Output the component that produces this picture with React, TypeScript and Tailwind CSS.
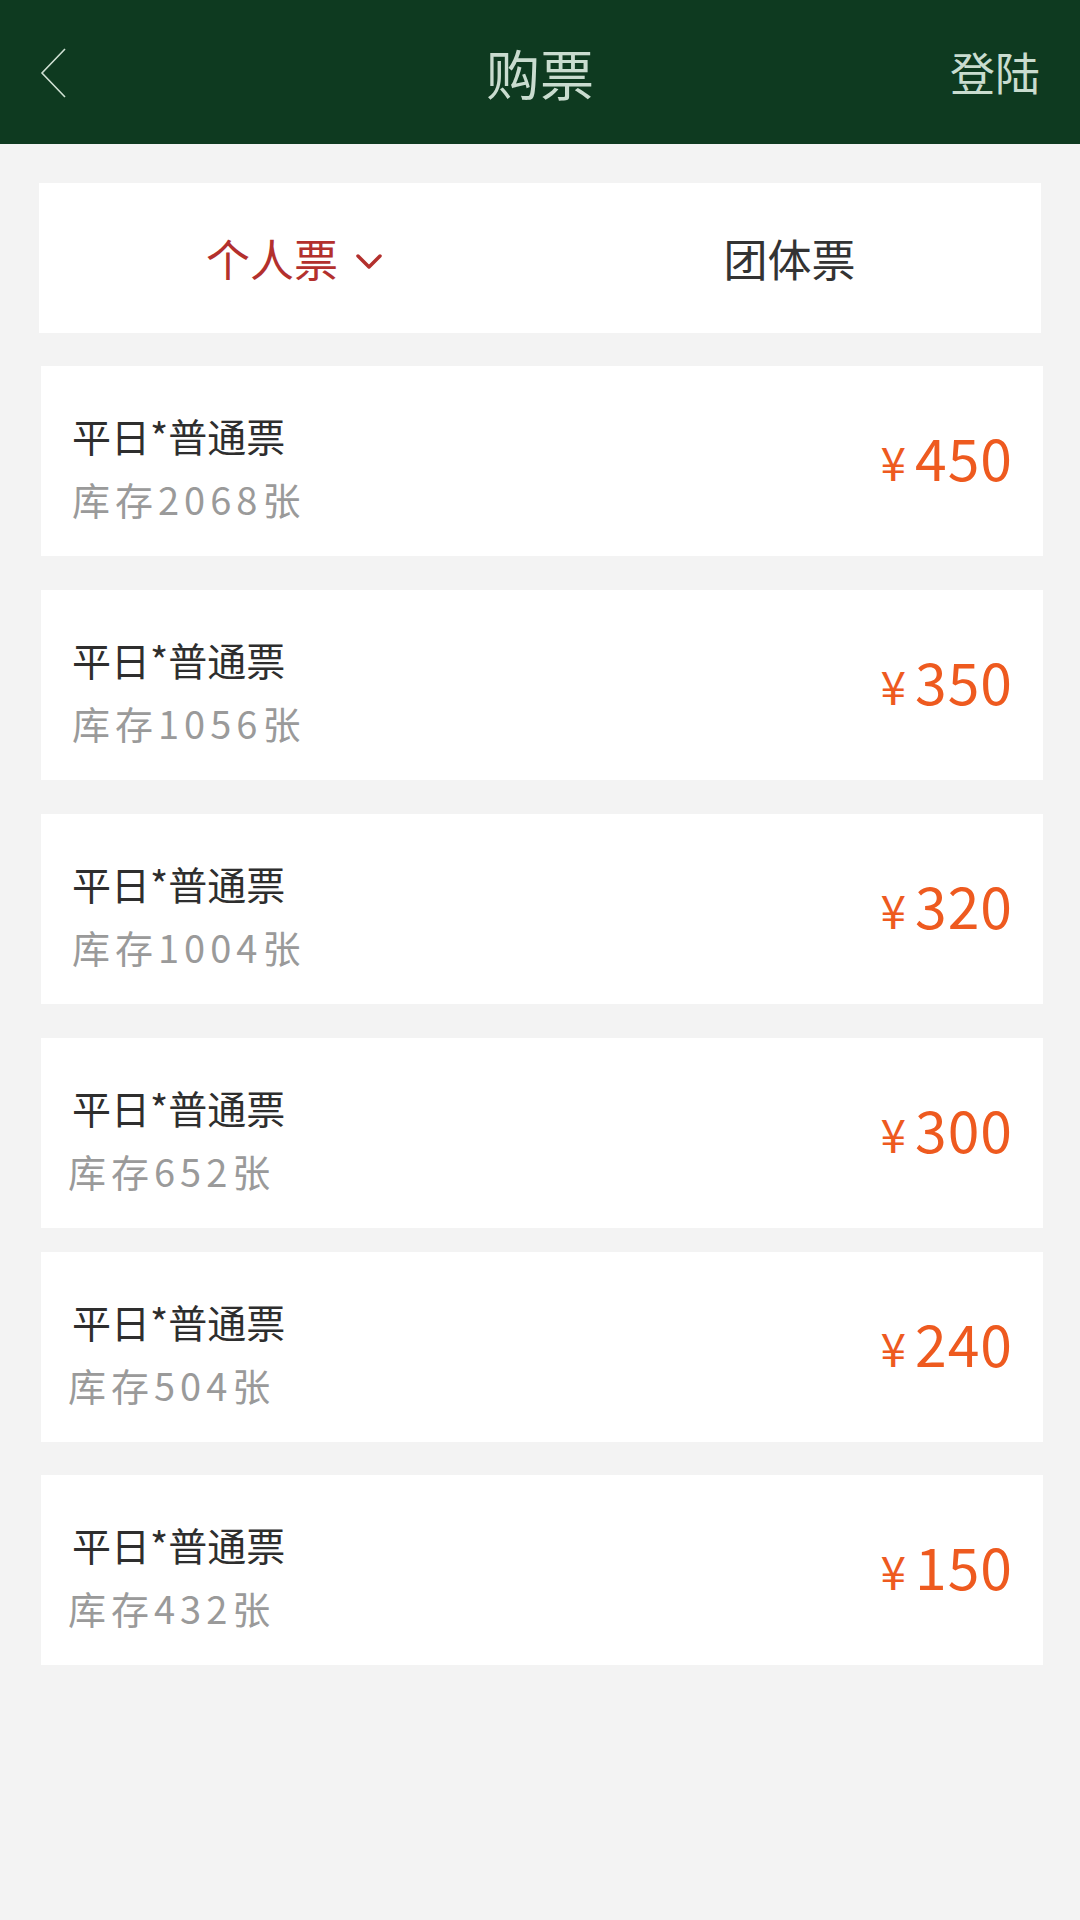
type Ticket = {
  name: string
  stock: number
  price: number
  shift?: boolean
  gap: string
}

const tickets: Ticket[] = [
  { name: "平日*普通票", stock: 2068, price: 450, gap: "mt-[33px]" },
  { name: "平日*普通票", stock: 1056, price: 350, gap: "mt-[34px]" },
  { name: "平日*普通票", stock: 1004, price: 320, gap: "mt-[34px]" },
  { name: "平日*普通票", stock: 652, price: 300, shift: true, gap: "mt-[34px]" },
  { name: "平日*普通票", stock: 504, price: 240, shift: true, gap: "mt-[24px]" },
  { name: "平日*普通票", stock: 432, price: 150, shift: true, gap: "mt-[33px]" },
]

function TicketRow({ t }: { t: Ticket }) {
  return (
    <div className={`${t.gap} flex h-[190px] items-center justify-between bg-white pl-[31px] pr-[30px]`}>
      <div className="mt-[12px] flex flex-col">
        <span className="text-[39px] leading-[64px] text-[#2e2e2e]">{t.name}</span>
        <span
          className={`text-[38px] leading-[64px] tracking-[5px] text-[#9a9a9a] ${t.shift ? "-ml-[4px]" : ""}`}
        >
          库存{t.stock}张
        </span>
      </div>
      <div className="flex items-baseline text-[#ee5a1f]">
        <span className="mr-[9px] text-[46px]">¥</span>
        <span className="text-[57px] leading-none tracking-[1px]">{t.price}</span>
      </div>
    </div>
  )
}

export default function App() {
  return (
    <div
      className="min-h-[1920px] w-[1080px] bg-[#f3f3f3]"
      style={{ fontFamily: '"Noto Sans CJK SC", "Noto Sans", sans-serif' }}
    >
      {/* Header */}
      <div className="flex h-[144px] items-center justify-between bg-[#0e3a20] px-[40px]">
        <div className="w-[140px]">
          <svg width="28" height="50" viewBox="0 0 28 50" className="mt-[2px]">
            <polyline points="25,1 2,25 25,49" fill="none" stroke="#cfe0d3" strokeWidth="1.6" />
          </svg>
        </div>
        <h1 className="text-[54px] text-[#c9dccf]">购票</h1>
        <div className="flex w-[140px] justify-end">
          <span className="text-[45px] text-[#c9dccf]">登陆</span>
        </div>
      </div>

      <div className="px-[39px] pt-[39px]">
        {/* Tabs */}
        <div className="flex h-[150px] bg-white">
          <button className="flex flex-1 items-center justify-center pl-[8px] text-[44px] text-[#b3302d]">
            个人票
            <svg width="28" height="18" viewBox="0 0 28 18" className="ml-[17px] mt-[8px]">
              <polyline
                points="3,3 14,14 25,3"
                fill="none"
                stroke="#b3302d"
                strokeWidth="3.5"
                strokeLinecap="round"
                strokeLinejoin="round"
              />
            </svg>
          </button>
          <button className="flex flex-1 items-center justify-center pr-[4px] text-[44px] text-[#333]">
            团体票
          </button>
        </div>

        {/* Ticket list */}
        <div className="-mr-[2px] ml-[2px] flex flex-col">
          {tickets.map((t, i) => (
            <TicketRow key={i} t={t} />
          ))}
        </div>
      </div>
    </div>
  )
}
